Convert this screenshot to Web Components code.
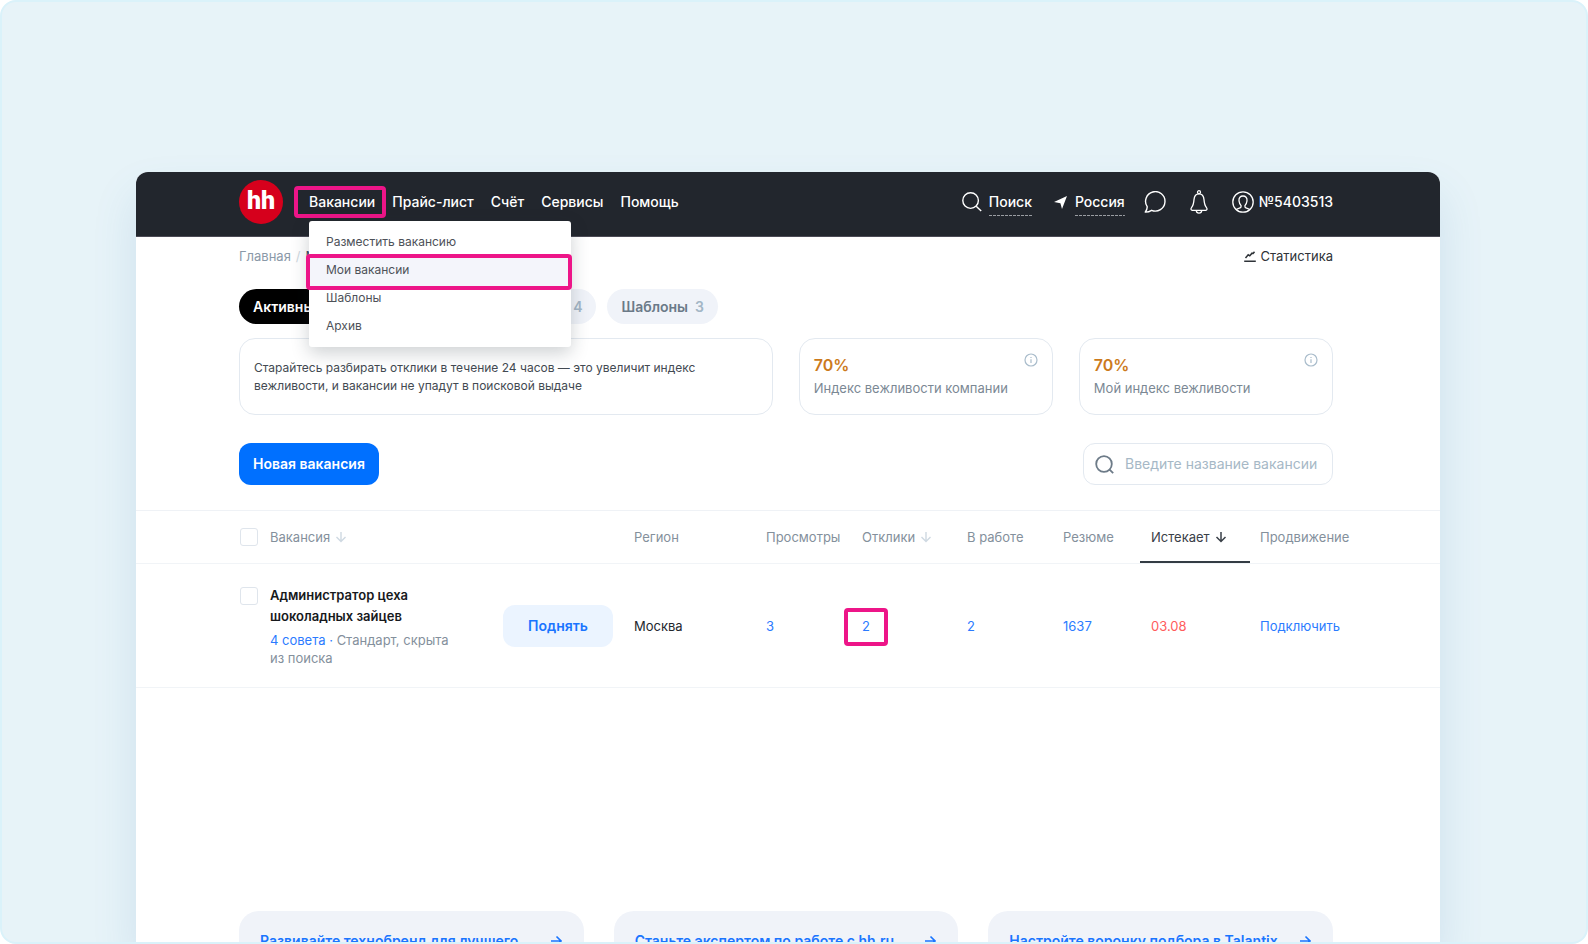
<!DOCTYPE html>
<html lang="ru">
<head>
<meta charset="utf-8">
<title>Мои вакансии</title>
<style>
body { margin: 0; font-family: Inter, "Noto Sans", sans-serif; font-size: 13px; line-height: 18px; color: #23272e; }
</style>
</head>
<body>
<hh-stage>
  <hh-header></hh-header>
  <hh-subnav></hh-subnav>
  <hh-tabs></hh-tabs>
  <hh-tips>
    <hh-card>Старайтесь разбирать отклики в течение 24 часов — это увеличит индекс вежливости, и вакансии не упадут в поисковой выдаче</hh-card>
    <hh-index-card>70%<span slot="caption">Индекс вежливости компании</span></hh-index-card>
    <hh-index-card>70%<span slot="caption">Мой индекс вежливости</span></hh-index-card>
  </hh-tips>
  <hh-toolbar></hh-toolbar>
  <hh-vacancies></hh-vacancies>
  <hh-promos slot="bottom">
    <hh-promo>Развивайте технобренд для лучшего</hh-promo>
    <hh-promo>Станьте экспертом по работе с hh.ru</hh-promo>
    <hh-promo>Настройте воронку подбора в Talantix</hh-promo>
  </hh-promos>
</hh-stage>
<script>
const base = `<style>
*, *::before, *::after { box-sizing: border-box; }
a { color: inherit; text-decoration: none; }
button, input { font: inherit; margin: 0; }
svg { display: block; flex: none; fill: none; stroke: currentColor; }
</style>`;
function define(name, html) {
  const t = document.createElement('template');
  t.innerHTML = base + html;
  customElements.define(name, class extends HTMLElement {
    constructor() {
      super();
      this.attachShadow({ mode: 'open' }).append(t.content.cloneNode(true));
    }
  });
}

define('hh-stage', `<style>
:host { display: block; background: #fff; }
.frame { height: 100vh; display: flex; flex-direction: column; overflow: hidden; border: 2px solid #daf2fa; border-radius: 16px; background: #e7f3f8; padding: 170px 146px 0 134px; }
main { flex: 1; min-height: 0; display: flex; flex-direction: column; background: #fff; border-radius: 12px 12px 0 0; box-shadow: 0 24px 44px rgba(60, 130, 180, .15); }
.bottom { margin: 223px 107px 0 103px; }
</style><div class="frame"><main><slot></slot><div class="bottom"><slot name="bottom"></slot></div></main></div>`);

define('hh-header', `<style>
:host { display: block; position: relative; z-index: 2; font-size: 14px; font-weight: 500; color: #fff; }
header { height: 65px; padding: 0 107px 4px 103px; display: flex; align-items: center; background: #22262d; border-bottom: 1px solid #4b4a55; border-radius: 12px 12px 0 0; }
.logo { width: 44px; height: 44px; border-radius: 50%; background: #d6001c; text-align: center; font: 900 25px/42px Roboto, sans-serif; }
nav { display: flex; gap: 17px; margin-left: 26px; }
.open { position: relative; }
.ring::after { content: ""; position: absolute; border: 4px solid #ed1588; border-radius: 4px; pointer-events: none; }
.open.ring::after { inset: -7px -11px -7px -15px; }
.tools { margin-left: auto; display: flex; align-items: center; }
.tool { display: flex; align-items: center; gap: 7px; }
.tool.city { gap: 8px; margin-left: 22px; }
.dash { background: repeating-linear-gradient(90deg, #9a9da2 0 3px, transparent 3px 4px) bottom / 100% 1px no-repeat; padding: 5px 0; }
hh-menu { position: absolute; left: 173px; top: 49px; }
.chat { margin-left: 19px; }
.bell { margin-left: 23px; }
.tool.user { gap: 5px; margin-left: 24px; }
</style>
<header>
  <a class="logo" href="#">hh</a>
  <nav><a class="open ring" href="#">Вакансии</a><a href="#">Прайс-лист</a><a href="#">Счёт</a><a href="#">Сервисы</a><a href="#">Помощь</a></nav>
  <div class="tools">
    <a class="tool" href="#"><svg width="20" height="20" viewBox="0 0 20 20" stroke-width="1.4"><circle cx="8.6" cy="8.6" r="7.8"/><path d="M14.2 14.2l5 4.8"/></svg><span class="dash">Поиск</span></a>
    <a class="tool city" href="#"><svg width="13" height="13" viewBox="0 0 13 13"><path fill="#fff" stroke="none" d="M13 0L8 13 6.4 7.3 0 6z"/></svg><span class="dash">Россия</span></a>
    <a class="chat" href="#" aria-label="Чаты"><svg width="23" height="22" viewBox="0 0 23 22" stroke-width="1.4" stroke-linejoin="round"><path d="M3.2 15.7A9.7 9.7 0 1 1 7.6 19.3C5.8 20.5 3.8 21.2 1.2 21.1 2.6 19.5 3.3 17.7 3.2 15.7z"/></svg></a>
    <a class="bell" href="#" aria-label="Уведомления"><svg width="18" height="24" viewBox="0 0 18 24" stroke-width="1.3" stroke-linejoin="round"><circle cx="9" cy="2.2" r="1.5"/><path d="M9 3.8C5.8 3.8 4.3 6.2 4 9.6 3.7 13.6 3.2 15.6 1.5 17.6 .6 18.7 .8 20.3 2.3 20.3H15.7C17.2 20.3 17.4 18.7 16.5 17.6 14.8 15.6 14.3 13.6 14 9.6 13.7 6.2 12.2 3.8 9 3.8zM6.3 20.5C6.5 24 11.5 24 11.7 20.5"/></svg></a>
    <a class="tool user" href="#"><svg width="22" height="22" viewBox="0 0 22 22" stroke-width="1.3"><circle cx="11" cy="11" r="10.2"/><path d="M4.3 18.5C5.5 17.2 8.6 17.3 9 16V14.4C7.7 13.4 7.3 11.8 7 9.8 6.7 6.7 8.4 5 11 5S15.3 6.7 15 9.8C14.7 11.8 14.3 13.4 13 14.4V16C13.4 17.3 16.5 17.2 17.7 18.5"/></svg>№5403513</a>
  </div>
</header>
<hh-menu></hh-menu>`);

define('hh-menu', `<style>
:host { display: block; width: 262px; padding: 7px 0; background: #fff; border-radius: 3px; box-shadow: 0 6px 18px rgba(30, 45, 55, .22); font-size: 12px; font-weight: 400; line-height: 28px; color: #4d5158; }
a { display: block; position: relative; padding-left: 17px; }
.current { background: #f4f5fb; z-index: 0; }
.current::after { content: ""; position: absolute; inset: -2px -1px -6px -3px; border: 4px solid #ed1588; border-radius: 4px; background: content-box #f4f5fb; z-index: -1; }
</style>
<a href="#">Разместить вакансию</a><a class="current" href="#">Мои вакансии</a><a href="#">Шаблоны</a><a href="#">Архив</a>`);

define('hh-subnav', `<style>
:host { display: flex; justify-content: space-between; margin: 10px 107px 0 103px; }
nav { display: flex; gap: 5px; color: #8a99a8; }
i { font-style: normal; color: #cfd8e0; }
.now { color: #3c5068; }
.stat { display: flex; align-items: center; gap: 4px; color: #2f3338; }
</style>
<nav><a href="#">Главная</a><i>/</i><span class="now">Мои вакансии</span></nav>
<a class="stat" href="#"><svg width="12" height="12" viewBox="0 0 12 12" stroke-width="1.5"><path d="M1.5 8L4.2 4.8 5.8 5.8 8 3.2 9.2 3.5 10.5 1.8M.2 11.2H11.8"/></svg>Статистика</a>`);

define('hh-tabs', `<style>
:host { display: flex; gap: 11px; width: 479px; margin: 24px 0 0 103px; font-size: 14px; font-weight: 600; }
button { height: 35px; padding: 0 14px; border: 0; border-radius: 18px; background: #f0f3f9; color: #6b7a88; display: flex; align-items: center; gap: 7px; white-space: nowrap; }
button.on { background: #000; color: #fff; }
.wide { flex: 1; justify-content: flex-end; }
b { font-weight: 600; color: #a3b6c6; }
</style>
<button class="on">Активные</button><button class="wide">Архив <b>4</b></button><button>Шаблоны <b>3</b></button>`);

define('hh-tips', `<style>
:host { display: grid; grid-template-columns: 21fr 10fr 10fr; gap: 26px; margin: 14px 107px 0 103px; }
</style><slot></slot>`);

define('hh-card', `<style>
:host { display: block; box-sizing: border-box; min-height: 77px; padding: 20px 60px 18px 14px; border: 1px solid #e3e9f0; border-radius: 16px; font-size: 12px; color: #434a52; }
</style><slot></slot>`);

define('hh-index-card', `<style>
:host { display: flex; justify-content: space-between; box-sizing: border-box; min-height: 77px; padding: 14px; border: 1px solid #e3e9f0; border-radius: 16px; }
strong { display: block; font-size: 16px; line-height: 24px; font-weight: 600; color: #cc7a1c; }
p { margin: 2px 0 0; color: #7b8894; }
svg { color: #a9bccb; }
</style><div><strong><slot></slot></strong><p><slot name="caption"></slot></p></div>
<svg width="14" height="14" viewBox="0 0 14 14" stroke-width="1.2"><circle cx="7" cy="7" r="6"/><path d="M7 6.2V10M7 4V5.1"/></svg>`);

define('hh-toolbar', `<style>
:host { display: flex; justify-content: space-between; margin: 28px 107px 25px 103px; font-size: 14px; }
button { height: 42px; padding: 0 14px; border: 0; border-radius: 12px; background: #0070ff; color: #fff; font-weight: 600; }
label { display: flex; align-items: center; gap: 11px; width: 250px; height: 42px; padding: 0 8px 0 11px; border: 1px solid #e3e9f0; border-radius: 12px; color: #6d7b88; }
input { flex: 1; min-width: 0; width: 0; padding: 0; border: 0; outline: 0; background: none; color: #23272e; }
input::placeholder { color: #a6b8c6; opacity: 1; }
</style>
<button>Новая вакансия</button>
<label><svg width="19" height="19" viewBox="0 0 19 19" stroke-width="1.8"><circle cx="9" cy="9" r="7.8"/><path d="M14.3 14.3l3.9 3.9"/></svg><input type="text" aria-label="Введите название вакансии" placeholder="Введите название вакансии"></label>`);

define('hh-vacancies', `<style>
:host { display: block; }
table { width: 100%; table-layout: fixed; border-collapse: separate; border-spacing: 0; }
th, td { padding: 0; text-align: left; border-bottom: 1px solid #f1f4f7; white-space: nowrap; }
th { height: 54px; border-top: 1px solid #eff2f6; font-weight: 400; color: #84909c; }
td { height: 124px; }
th:first-child, td:first-child { padding-left: 104px; }
td:first-child, td:nth-child(2) { vertical-align: top; }
th span { display: inline-flex; align-items: center; gap: 5px; }
th svg { color: #cfd9e2; }
th.sorted { position: relative; padding-left: 11px; color: #3a4048; }
th.sorted svg { color: #3a4048; }
th.sorted::after { content: ""; position: absolute; left: 0; right: 0; bottom: 0; height: 2px; background: #343c44; }
.shift { padding-left: 11px; } .last { padding-left: 10px; }
input { appearance: none; display: block; width: 18px; height: 18px; border: 1px solid #dfe5ec; border-radius: 3px; background: #fff; }
td input { margin-top: 23px; }
h3 { margin: 21px 0 4px; font-size: 13px; line-height: 21px; font-weight: 600; color: #17191c; }
p { margin: 0; color: #84909c; }
td a { color: #2b7bff; }
td button { width: 110px; height: 42px; padding: 0; border: 0; border-radius: 12px; background: #ebf4ff; color: #1a75ff; font-size: 14px; font-weight: 600; }
.red { color: #ff5c5c; }
.ring { position: relative; }
.ring::after { content: ""; position: absolute; inset: -10px -18px -12px; border: 4px solid #ed1588; border-radius: 4px; }
</style>
<table>
<colgroup><col style="width:134px"><col style="width:233px"><col style="width:131px"><col style="width:132px"><col style="width:96px"><col style="width:105px"><col style="width:96px"><col style="width:77px"><col style="width:110px"><col></colgroup>
<thead><tr>
<th><input type="checkbox" aria-label="Выбрать все вакансии"></th>
<th><span>Вакансия <svg width="12" height="12" viewBox="0 0 12 12" stroke-width="1.4"><path d="M6 1V10.5M1.5 6L6 10.5 10.5 6"/></svg></span></th>
<th></th><th>Регион</th><th>Просмотры</th>
<th><span>Отклики <svg width="12" height="12" viewBox="0 0 12 12" stroke-width="1.4"><path d="M6 1V10.5M1.5 6L6 10.5 10.5 6"/></svg></span></th>
<th>В работе</th><th>Резюме</th>
<th class="sorted"><span>Истекает <svg width="12" height="12" viewBox="0 0 12 12" stroke-width="1.5"><path d="M6 1V10.5M1.5 6L6 10.5 10.5 6"/></svg></span></th>
<th class="last">Продвижение</th>
</tr></thead>
<tbody><tr>
<td><input type="checkbox" aria-label="Выбрать: Администратор цеха шоколадных зайцев"></td>
<td><h3>Администратор цеха<br>шоколадных зайцев</h3><p><a href="#">4 совета ·</a> Стандарт, скрыта<br>из поиска</p></td>
<td><button>Поднять</button></td>
<td>Москва</td>
<td><a href="#">3</a></td>
<td><a class="ring" href="#">2</a></td>
<td><a href="#">2</a></td>
<td><a href="#">1637</a></td>
<td class="shift red">03.08</td>
<td class="last"><a href="#">Подключить</a></td>
</tr></tbody>
</table>`);

define('hh-promos', `<style>
:host { display: grid; grid-template-columns: repeat(3, 1fr); gap: 30px; }
</style><slot></slot>`);

define('hh-promo', `<style>
:host { display: block; min-height: 120px; border-radius: 20px; background: #f0f3f9; font-size: 14px; font-weight: 600; color: #1a75ff; }
a { display: flex; justify-content: space-between; align-items: center; padding: 21px 22px 0 21px; }
</style><a href="#"><slot></slot><svg width="12" height="12" viewBox="0 0 12 12" stroke-width="1.6"><path d="M1 6H10.5M6.5 1.5L11 6 6.5 10.5"/></svg></a>`);
</script>
</body>
</html>
